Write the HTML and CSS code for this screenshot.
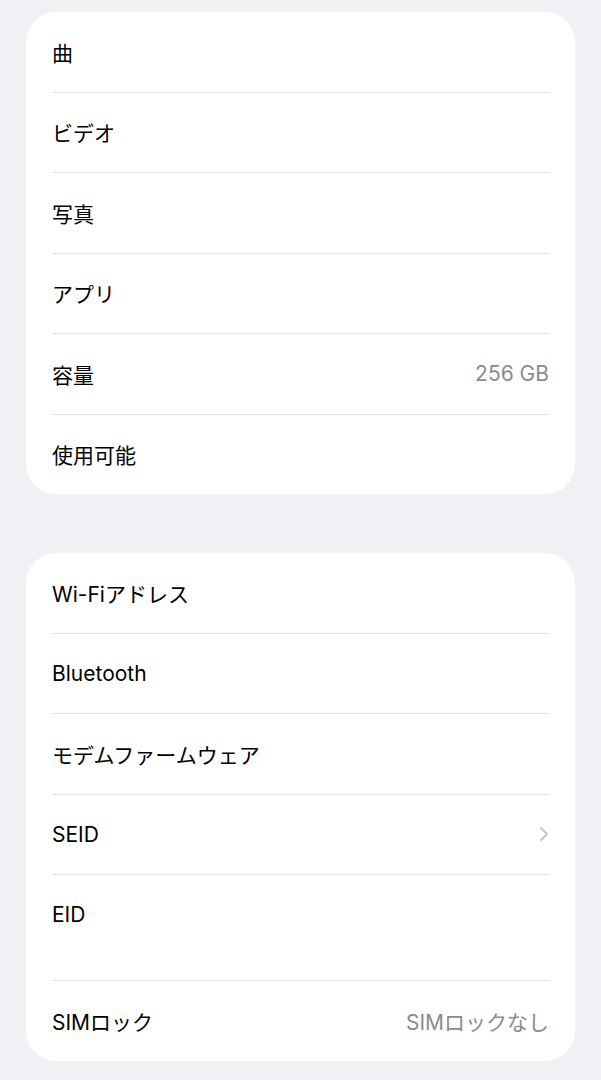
FILE: index.html
```html
<!DOCTYPE html>
<html lang="ja">
<head>
    <meta charset="UTF-8">
    <meta name="viewport" content="width=device-width, initial-scale=1.0">
    <title>情報</title>
    <link rel="stylesheet" href="styles.css">
</head>
<body>
    <section class="group">
        <div class="row"><span class="label">曲</span></div>
        <div class="row"><span class="label">ビデオ</span></div>
        <div class="row"><span class="label">写真</span></div>
        <div class="row"><span class="label">アプリ</span></div>
        <div class="row"><span class="label">容量</span><span class="value">256 GB</span></div>
        <div class="row"><span class="label">使用可能</span></div>
    </section>

    <section class="group">
        <div class="row"><span class="label">Wi-Fiアドレス</span></div>
        <div class="row"><span class="label">Bluetooth</span></div>
        <div class="row"><span class="label">モデムファームウェア</span></div>
        <div class="row">
            <span class="label">SEID</span>
            <svg class="chevron" width="10" height="16" viewBox="0 0 10 16">
                <path d="M2 2 L8 8 L2 14" fill="none" stroke="#c4c4c7" stroke-width="1.8" stroke-linecap="round" stroke-linejoin="round"/>
            </svg>
        </div>
        <div class="row row-tall"><span class="label">EID</span></div>
        <div class="row"><span class="label">SIMロック</span><span class="value">SIMロックなし</span></div>
    </section>
</body>
</html>
```

FILE: styles.css
```css
body {
    margin: 0;
    padding: 12px 26px 0;
    background-color: #f0f0f5;
    font-family: Inter, "Noto Sans CJK JP", sans-serif;
    color: #000;
}
.group {
    background: #fff;
    border-radius: 30px;
    padding: 0 25px 0 26px;
    margin-bottom: 59px;
}
.row {
    display: flex;
    align-items: center;
    justify-content: space-between;
    height: 79.5px;
    border-bottom: 1px solid #e2e2e5;
    font-size: 21px;
}
.row:last-child {
    border-bottom: none;
}
.row-tall {
    height: 105px;
    align-items: flex-start;
}
.row-tall .label {
    margin-top: 27px;
}
.value {
    color: #8a8a8e;
    margin-right: 1px;
}
.chevron {
    margin-right: 1px;
}
```
